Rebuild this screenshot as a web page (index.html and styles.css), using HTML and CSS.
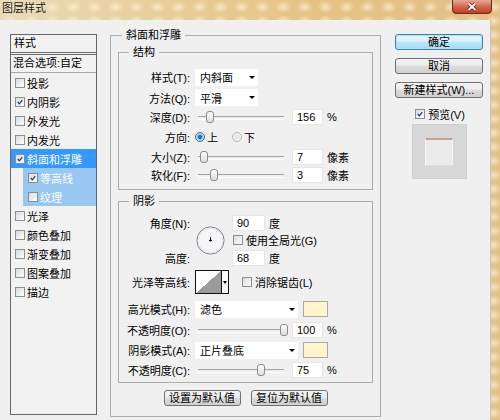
FILE: index.html
```html
<!DOCTYPE html>
<html>
<head>
<meta charset="utf-8">
<link rel="stylesheet" href="styles.css">
</head>
<body>
<div class="window">
  <div class="titlebar">
    <span class="title">图层样式</span>
    <span class="close">
      <svg width="40" height="14" viewBox="0 0 40 14"><defs><linearGradient id="cg" x1="0" y1="0" x2="0" y2="1"><stop offset="0" stop-color="#eaa999"/><stop offset=".5" stop-color="#d4664c"/><stop offset="1" stop-color="#c03a1e"/></linearGradient></defs><path d="M0.5 0 V10 Q0.5 13.5 4 13.5 H36 Q39.5 13.5 39.5 10 V0" fill="url(#cg)" stroke="#6e2a1c"/><path d="M16.5 3.5 L23.5 10 M23.5 3.5 L16.5 10" stroke="#5a2014" stroke-width="3.4"/><path d="M16.5 3.5 L23.5 10 M23.5 3.5 L16.5 10" stroke="#fff" stroke-width="1.8"/></svg>
    </span>
  </div>
  <div class="dialog">
    <div class="list">
      <div class="list-head">样式</div>
      <div class="list-blend">混合选项:自定</div>
      <div class="item"><span class="cb"></span>投影</div>
      <div class="item"><span class="cb"><svg viewBox="0 0 10 10"><path d="M2.2 5 L4.2 7.3 L7.8 2.6" stroke="#1f3f7c" stroke-width="1.6" fill="none"/></svg></span>内阴影</div>
      <div class="item"><span class="cb"></span>外发光</div>
      <div class="item"><span class="cb"></span>内发光</div>
      <div class="item sel"><span class="cb"><svg viewBox="0 0 10 10"><path d="M2.2 5 L4.2 7.3 L7.8 2.6" stroke="#1f3f7c" stroke-width="1.6" fill="none"/></svg></span>斜面和浮雕</div>
      <div class="item sub"><span class="cb"><svg viewBox="0 0 10 10"><path d="M2.2 5 L4.2 7.3 L7.8 2.6" stroke="#1f3f7c" stroke-width="1.6" fill="none"/></svg></span>等高线</div>
      <div class="item sub"><span class="cb"></span>纹理</div>
      <div class="item"><span class="cb"></span>光泽</div>
      <div class="item"><span class="cb"></span>颜色叠加</div>
      <div class="item"><span class="cb"></span>渐变叠加</div>
      <div class="item"><span class="cb"></span>图案叠加</div>
      <div class="item"><span class="cb"></span>描边</div>
    </div>

    <fieldset class="group outer">
      <legend>斜面和浮雕</legend>
      <fieldset class="group inner struct">
        <legend>结构</legend>
        <div class="struct-grid">
          <div class="lbl">样式(T):</div>
          <div class="ctl"><div class="select"><span>内斜面</span><span class="arrow"></span></div></div>
          <div class="lbl">方法(Q):</div>
          <div class="ctl"><div class="select"><span>平滑</span><span class="arrow"></span></div></div>
          <div class="lbl">深度(D):</div>
          <div class="ctl"><div class="slider"><span class="thumb" style="left:11px"></span></div><div class="num">156</div><span class="unit">%</span></div>
          <div class="lbl">方向:</div>
          <div class="ctl"><span class="radio on"></span><span class="rtext">上</span><span class="radio off"></span><span class="rtext">下</span></div>
          <div class="lbl">大小(Z):</div>
          <div class="ctl"><div class="slider"><span class="thumb" style="left:5px"></span></div><div class="num">7</div><span class="unit">像素</span></div>
          <div class="lbl">软化(F):</div>
          <div class="ctl"><div class="slider"><span class="thumb" style="left:15px"></span></div><div class="num">3</div><span class="unit">像素</span></div>
        </div>
      </fieldset>

      <fieldset class="group inner shadow">
        <legend>阴影</legend>
        <div class="angle-grid">
          <div class="lbl a1">角度(N):</div>
          <div class="dial">
            <svg width="29" height="29" viewBox="0 0 29 29"><circle cx="14.5" cy="14.5" r="13.6" fill="#f6f6f6" stroke="#7a8796"/><circle cx="14.5" cy="14.5" r="12.4" fill="none" stroke="#e2e5e9"/><line x1="14.5" y1="14.5" x2="14.5" y2="11.2" stroke="#000"/><line x1="13" y1="14.5" x2="16" y2="14.5" stroke="#000" stroke-width=".8"/><circle cx="14.5" cy="14.5" r="1" fill="#000"/></svg>
          </div>
          <div class="ctl a1"><div class="num deg">90</div><span class="unit">度</span></div>
          <div class="ctl a2"><span class="cb global"></span><span>使用全局光(G)</span></div>
          <div class="lbl a3">高度:</div>
          <div class="ctl a3"><div class="num deg">68</div><span class="unit">度</span></div>
        </div>
        <div class="row contour-row">
          <div class="lbl">光泽等高线:</div>
          <div class="ctl">
            <span class="contour"></span><span class="contour-arrow"><span class="arrow"></span></span>
            <span class="cb anti"></span><span>消除锯齿(L)</span>
          </div>
        </div>
        <div class="row mode-row">
          <div class="lbl">高光模式(H):</div>
          <div class="ctl"><div class="select wide"><span>滤色</span><span class="arrow"></span></div><span class="swatch"></span></div>
        </div>
        <div class="row op-row">
          <div class="lbl">不透明度(O):</div>
          <div class="ctl"><div class="slider"><span class="thumb" style="left:85px"></span></div><div class="num">100</div><span class="unit">%</span></div>
        </div>
        <div class="row mode-row2">
          <div class="lbl">阴影模式(A):</div>
          <div class="ctl"><div class="select wide"><span>正片叠底</span><span class="arrow"></span></div><span class="swatch"></span></div>
        </div>
        <div class="row op-row2">
          <div class="lbl">不透明度(C):</div>
          <div class="ctl"><div class="slider"><span class="thumb" style="left:62px"></span></div><div class="num">75</div><span class="unit">%</span></div>
        </div>
      </fieldset>

      <div class="defaults">
        <div class="btn">设置为默认值</div>
        <div class="btn">复位为默认值</div>
      </div>
    </fieldset>

    <div class="side">
      <div class="btn primary">确定</div>
      <div class="btn">取消</div>
      <div class="btn">新建样式(W)...</div>
      <div class="preview-toggle"><span class="cb"><svg viewBox="0 0 10 10"><path d="M2.2 5 L4.2 7.3 L7.8 2.6" stroke="#1f3f7c" stroke-width="1.6" fill="none"/></svg></span><span>预览(V)</span></div>
      <div class="preview"><div class="preview-square"></div></div>
    </div>
  </div>
</div>
</body>
</html>
```

FILE: styles.css
```css
* { box-sizing: border-box; }
html, body { margin: 0; padding: 0; }
body {
  width: 500px;
  height: 420px;
  overflow: hidden;
  font-family: "Liberation Sans", "Noto Sans CJK SC", sans-serif;
  font-size: 11px;
  color: #000;
  background-color: #e2c38a;
  background-image:
    radial-gradient(ellipse 8px 6px at 50% 50%, rgba(255, 244, 214, 0.7), rgba(255, 244, 214, 0)),
    linear-gradient(90deg, #eadbb8 0%, #e8cf9c 30%, #e6c283 65%, #e2c08a 100%);
  background-size: 21px 14px, 100% 100%;
}
.window {
  width: 500px;
  height: 420px;
  display: flex;
  flex-direction: column;
}
.titlebar {
  height: 20px;
  flex: none;
  display: flex;
  justify-content: space-between;
  align-items: flex-start;
  padding: 0 8px 0 2px;
}
.title { line-height: 17px; color: #1a1a1a; }
.close { display: block; width: 40px; height: 14px; }
.close svg { display: block; }

.dialog {
  flex: 1;
  width: 491px;
  background: #f0f0f0;
  border-right: 1px solid #c4c4c4;
  display: flex;
  align-items: flex-start;
  padding: 8px 0 0 10px;
}

/* left list */
.list {
  width: 87px;
  height: 381px;
  margin-top: 6px;
  border: 1px solid #676767;
  background: #f2f2f2;
  flex: none;
}
.list-head {
  height: 20px;
  line-height: 17px;
  padding-left: 3px;
  border-bottom: 3px double #6c6c6c;
}
.list-blend {
  height: 18px;
  line-height: 17px;
  padding-left: 2px;
  border-bottom: 1px solid #a9a9a9;
}
.item {
  height: 19px;
  display: flex;
  align-items: center;
  padding-left: 4px;
}
.item .cb { margin-right: 2px; }
.item.sel { background: #3399ff; color: #fff; }
.item.sub { margin-left: 12px; padding-left: 5px; background: #98c7f2; color: #fff; }

.cb {
  width: 10px;
  height: 10px;
  flex: none;
  display: inline-block;
  border: 1px solid #8c8e8f;
  background: linear-gradient(135deg, #d9dbdd, #fdfdfd);
}
.cb svg { display: block; width: 8px; height: 8px; }

/* fieldsets */
fieldset.group {
  margin: 0;
  min-width: 0;
  border: 1px solid #acacac;
}
fieldset.group legend {
  height: 14px;
  line-height: 14px;
  padding: 0 4px;
}
.outer {
  width: 271px;
  margin-left: 13px !important;
  padding: 3px 7px 10px;
  flex: none;
}
.outer > legend { margin-left: 4px; }
.inner { padding: 8px 0 5px; }
.inner > legend { margin-left: 10px; }
.shadow { margin-top: 4px !important; padding: 6px 0 3px; }

.struct-grid {
  display: grid;
  grid-template-columns: 71px 1fr;
  grid-template-rows: 20px 21px 18px 21px 19px 18px;
  column-gap: 5px;
}
.lbl { text-align: right; white-space: nowrap; display: flex; align-items: center; justify-content: flex-end; }
.ctl { display: flex; align-items: center; white-space: nowrap; }

.select {
  width: 63px;
  height: 17px;
  background: #fff;
  display: flex;
  align-items: center;
  justify-content: space-between;
  padding: 0 3px 0 5px;
}
.select.wide { width: 103px; }
.arrow {
  width: 0;
  height: 0;
  border-left: 3px solid transparent;
  border-right: 3px solid transparent;
  border-top: 3px solid #000;
}

.slider {
  position: relative;
  width: 92px;
  height: 12px;
  flex: none;
}
.slider::before {
  content: "";
  position: absolute;
  left: 3px;
  right: 3px;
  top: 5px;
  height: 2px;
  border-top: 1px solid #a4a4a4;
  border-bottom: 1px solid #ffffff;
}
.thumb {
  position: absolute;
  top: 0;
  width: 8px;
  height: 12px;
  border: 1px solid #8c8c8c;
  border-radius: 3px;
  background: linear-gradient(#fcfcfc, #dedede);
}
.num {
  width: 31px;
  height: 16px;
  margin-left: 5px;
  background: #fff;
  border: 1px solid #e6e6e6;
  padding-left: 4px;
  line-height: 14px;
}
.num.deg { width: 33px; margin-left: 0; }
.unit { margin-left: 4px; }

.radio {
  width: 10px;
  height: 10px;
  border-radius: 50%;
  flex: none;
  display: inline-block;
}
.radio.on {
  border: 1px solid #2c628b;
  background: radial-gradient(circle, #2a6fb4 0 30%, #8cc4ef 45%, #e9f2fb 75%);
}
.radio.off {
  border: 1px solid #b6b6b6;
  background: radial-gradient(circle, #e6e6e6 0 40%, #fafafa 80%);
  margin-left: 14px;
}
.rtext { margin-left: 2px; }

.angle-grid {
  display: grid;
  grid-template-columns: 71px 32px 1fr;
  grid-template-rows: 17px 18px 17px;
  column-gap: 5px;
}
.a1 { grid-row: 1; }
.a2 { grid-row: 2; grid-column: 3; }
.a3 { grid-row: 3; }
.lbl.a1, .lbl.a3 { grid-column: 1; }
.ctl.a1, .ctl.a3 { grid-column: 3; }
.dial { grid-column: 2; grid-row: 1 / 4; align-self: center; margin-left: 1px; height: 29px; }
.dial svg { display: block; }
.cb.global { margin-left: 1px; margin-right: 3px; }

.row { display: flex; }
.row .lbl { width: 71px; margin-right: 5px; }
.contour-row { height: 26px; margin-top: 3px; }
.mode-row { height: 18px; margin-top: 5px; }
.op-row { height: 18px; margin-top: 3px; }
.mode-row2 { height: 18px; margin-top: 2px; }
.op-row2 { height: 18px; margin-top: 2px; }

.contour {
  width: 27px;
  height: 24px;
  border: 1px solid #111;
  background: linear-gradient(to bottom right, #ffffff 50%, #9b9b9b 50%);
  display: inline-block;
}
.contour-arrow {
  width: 7px;
  height: 24px;
  border: 1px solid #111;
  border-left: none;
  background: #fafafa;
  display: inline-flex;
  align-items: center;
  justify-content: center;
}
.contour-arrow .arrow { border-left-width: 2px; border-right-width: 2px; }
.cb.anti { margin-left: 13px; margin-right: 3px; }

.swatch {
  width: 25px;
  height: 16px;
  margin-left: 5px;
  border: 1px solid #a9a9a9;
  background: #fff4cb;
  display: inline-block;
}

.defaults {
  display: flex;
  justify-content: center;
  gap: 10px;
  margin-top: 7px;
}
.btn {
  height: 16px;
  line-height: 14px;
  text-align: center;
  border: 1px solid #707070;
  border-radius: 3px;
  background: linear-gradient(#f4f4f4 0%, #ececec 45%, #dcdcdc 50%, #d0d0d0 100%);
  white-space: nowrap;
}
.defaults .btn { width: 77px; }

.side {
  width: 88px;
  margin-left: 14px;
  margin-top: 6px;
  display: flex;
  flex-direction: column;
  gap: 8px;
  flex: none;
}
.btn.primary {
  border-color: #3c7fb1;
  box-shadow: inset 0 0 0 1px #a9e4fc;
  background: linear-gradient(#eaf6fd 0%, #d9f0fc 45%, #bee6fd 50%, #a7d9f5 100%);
}
.preview-toggle {
  margin-top: 1px;
  height: 13px;
  display: flex;
  align-items: center;
  justify-content: center;
  gap: 3px;
  padding-left: 2px;
}
.preview {
  margin: -4px auto 0;
  width: 55px;
  height: 55px;
  background: #d8d8d8;
  border: 1px solid #d0d0d0;
  display: flex;
  align-items: center;
  justify-content: center;
}
.preview-square {
  width: 28px;
  height: 28px;
  background: #ebebeb;
  border-top: 2px solid #c7a192;
  border-left: 1px solid #f7f7f7;
  border-right: 1px solid #f4f4f4;
  border-bottom: 1px solid #e0e0e0;
}
```
